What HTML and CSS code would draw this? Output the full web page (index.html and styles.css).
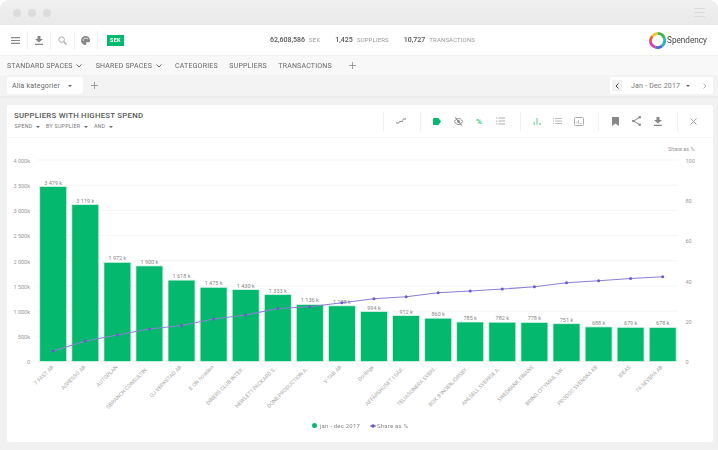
FILE: index.html
```html
<!DOCTYPE html>
<html lang="en">
<head>
<meta charset="utf-8">
<title>Spendency</title>
<link rel="stylesheet" href="styles.css">
</head>
<body>
<div class="window">
  <div class="titlebar">
    <div class="dots"><i></i><i></i><i></i></div>
    <div class="burger"><i></i><i></i><i></i></div>
  </div>
  <header class="toolbar">
    <div class="tools">
      <div class="tool"><svg width="9" height="7" viewBox="0 0 9 7"><path d="M0 .6h9M0 3.500h9M0 6.400h9" stroke="#888" stroke-width="1.100"/></svg></div>
      <div class="tool"><svg width="8" height="9" viewBox="0 0 8 9"><path d="M2.500 0h3v3H8L4 6.500 0 3h2.500zM0 7.800h8V9H0z" fill="#888"/></svg></div>
      <div class="tool"><svg width="9" height="9" viewBox="0 0 9 9"><circle cx="3.600" cy="3.600" r="2.800" fill="none" stroke="#aaa" stroke-width="1"/><path d="M5.700 5.700 8.500 8.500" stroke="#aaa" stroke-width="1.300"/></svg></div>
      <div class="tool tool-last"><svg width="9" height="9" viewBox="0 0 9 9"><path d="M4.500 0a4.500 4.500 0 0 0 0 9c1.200 0 1-1 .7-1.700-.2-.7.2-1.100 1-1.100H8c.7 0 1-.6 1-1.400C9 2 7 0 4.500 0z" fill="#888"/><circle cx="2.200" cy="4" r=".7" fill="#fff"/><circle cx="3.800" cy="2.200" r=".7" fill="#fff"/><circle cx="6" cy="2.500" r=".7" fill="#fff"/></svg></div>
      <span class="badge">SEK</span>
    </div>
    <div class="stats">
      <span><b>62,608,586</b> SEK</span>
      <span><b>1,425</b> SUPPLIERS</span>
      <span><b>10,727</b> TRANSACTIONS</span>
    </div>
    <div class="logo">
      <svg width="17" height="17" viewBox="0 0 17 17" fill="none" stroke-width="2.800">
        <path d="M8.500 1.400a7.100 7.100 0 0 1 6.800 5" stroke="#39b54a"/>
        <path d="M15.300 6.400a7.100 7.100 0 0 1-2.200 7.500" stroke="#1fb5c9"/>
        <path d="M13.100 13.900a7.100 7.100 0 0 1-6.800 1.300" stroke="#4a6fd8"/>
        <path d="M6.300 15.200a7.100 7.100 0 0 1-4.900-6" stroke="#d83fa8"/>
        <path d="M1.400 9.200a7.100 7.100 0 0 1 2-5" stroke="#ef5a3c"/>
        <path d="M3.400 4.200a7.100 7.100 0 0 1 5.100-2.800" stroke="#f4c430"/>
      </svg>
      <span>Spendency</span>
    </div>
  </header>
  <nav class="nav">
    <span class="nav-item nav-menu">STANDARD SPACES <svg class="chev" width="6" height="4" viewBox="0 0 6 4"><path d="M.5.500 3 3 5.500.500" fill="none" stroke="#666"/></svg></span>
    <span class="nav-item nav-menu">SHARED SPACES <svg class="chev" width="6" height="4" viewBox="0 0 6 4"><path d="M.5.500 3 3 5.500.500" fill="none" stroke="#666"/></svg></span>
    <span class="nav-item">CATEGORIES</span>
    <span class="nav-item">SUPPLIERS</span>
    <span class="nav-item">TRANSACTIONS</span>
    <svg class="plus" width="7" height="7" viewBox="0 0 7 7"><path d="M3.500 0v7M0 3.500h7" stroke="#888" stroke-width=".8"/></svg>
  </nav>
  <div class="tabs">
    <div class="tab">Alla kategorier <i class="caret"></i></div>
    <svg class="plus" width="7" height="7" viewBox="0 0 7 7"><path d="M3.500 0v7M0 3.500h7" stroke="#888" stroke-width=".8"/></svg>
    <div class="period">
      <span class="prev"><svg width="4" height="6" viewBox="0 0 4 6"><path d="M3.500.500 1 3l2.500 2.500" fill="none" stroke="#444"/></svg></span>
      <span class="period-label">Jan - Dec 2017</span><i class="caret"></i>
      <svg class="next" width="4" height="6" viewBox="0 0 4 6"><path d="M.5.500 3 3 .5 5.500" fill="none" stroke="#bbb"/></svg>
    </div>
  </div>
  <main class="card">
    <div class="card-head">
      <div class="card-title">
        <h1>SUPPLIERS WITH HIGHEST SPEND</h1>
        <div class="filters"><span>SPEND <i class="caret"></i></span><span>BY SUPPLIER <i class="caret"></i></span><span>AND <i class="caret"></i></span></div>
      </div>
      <div class="actions">
        <div class="group g1"><svg width="10" height="6" viewBox="0 0 10 6"><path d="M0 5h3M3.500 3.500h3M7 1h3" fill="none" stroke="#888" stroke-width="1.100"/><path d="M3 5 3.500 3.500M6.500 3.500 7 1" stroke="#888" stroke-width=".7"/></svg></div>
        <div class="group g2">
          <svg width="8" height="7" viewBox="0 0 8 7"><path d="M1 0h4.500L8 3.500 5.500 7H1a1 1 0 0 1-1-1V1a1 1 0 0 1 1-1z" fill="#04b96d"/></svg>
          <svg width="9" height="9" viewBox="0 0 9 9"><path d="M.3 4.500C1.800 2.200 3.200 1.500 4.500 1.500s2.700.7 4.200 3C7.200 6.800 5.800 7.500 4.500 7.500S1.800 6.800.3 4.500z" fill="none" stroke="#888"/><circle cx="4.500" cy="4.500" r="1.400" fill="#888"/><path d="m1.300 .5 6.400 8" stroke="#888" stroke-width="1.100"/></svg>
          <span class="pct">%</span>
          <svg width="9" height="8" viewBox="0 0 9 8"><path d="M2.500 1H9M2.500 4H9M2.500 7H9M0 1h1.300M0 4h1.300M0 7h1.300" stroke="#aaa"/></svg>
        </div>
        <div class="group g3">
          <svg width="8" height="7" viewBox="0 0 8 7"><path d="M.5 4v3H2V4zM3.300 0v7h1.400V0zM6.300 5v2H8V5z" fill="#8fdcb9"/></svg>
          <svg width="9" height="6" viewBox="0 0 9 6"><path d="M2 .5h7M2 3h7M2 5.500h7M0 .5h1M0 3h1M0 5.500h1" stroke="#bbb"/></svg>
          <svg width="10" height="9" viewBox="0 0 10 9"><rect x=".5" y=".5" width="9" height="8" rx="1" fill="none" stroke="#aaa"/><path d="M3 4.500v2M4.500 3v3.500M5.500 6.500h2" stroke="#aaa" stroke-width=".8"/></svg>
        </div>
        <div class="group g4">
          <svg width="7" height="9" viewBox="0 0 7 9"><path d="M0 0h7v9L3.500 6.500 0 9z" fill="#888"/></svg>
          <svg width="9" height="10" viewBox="0 0 9 10"><path d="M8 1.200 1.500 5 8 8.800" fill="none" stroke="#888"/><circle cx="7.700" cy="1.300" r="1.300" fill="#888"/><circle cx="1.300" cy="5" r="1.300" fill="#888"/><circle cx="7.700" cy="8.700" r="1.300" fill="#888"/></svg>
          <svg width="8" height="9" viewBox="0 0 8 9"><path d="M2.500 0h3v3H8L4 6.500 0 3h2.500zM0 7.800h8V9H0z" fill="#888"/></svg>
        </div>
        <div class="group g5"><svg width="7" height="7" viewBox="0 0 7 7"><path d="m.5.500 6 6m0-6-6 6" stroke="#999" stroke-width=".9"/></svg></div>
      </div>
    </div>
    <div class="chart">
      <svg class="plot" width="706" height="304" viewBox="7 138 706 304">
        <g class="grid">
          <path d="M37 160H678M37 185.200H678M37 210.400H678M37 235.600H678M37 260.800H678M37 286H678M37 311.200H678M37 336.400H678M37 361.600H678"/>
        </g>
        <g class="bars">
          <rect x="39.700" y="186.500" width="27" height="175"/>
          <rect x="71.800" y="204.600" width="27" height="156.900"/>
          <rect x="103.900" y="262.300" width="27" height="99.200"/>
          <rect x="135.900" y="265.900" width="27" height="95.600"/>
          <rect x="168" y="280.100" width="27" height="81.400"/>
          <rect x="200.100" y="287.300" width="27" height="74.200"/>
          <rect x="232.200" y="289.600" width="27" height="71.900"/>
          <rect x="264.300" y="294.500" width="27" height="67"/>
          <rect x="296.300" y="304.400" width="27" height="57.100"/>
          <rect x="328.400" y="305.800" width="27" height="55.700"/>
          <rect x="360.500" y="311.500" width="27" height="50"/>
          <rect x="392.600" y="315.600" width="27" height="45.900"/>
          <rect x="424.700" y="318.200" width="27" height="43.300"/>
          <rect x="456.700" y="322" width="27" height="39.500"/>
          <rect x="488.800" y="322.200" width="27" height="39.300"/>
          <rect x="520.900" y="322.400" width="27" height="39.100"/>
          <rect x="553" y="323.700" width="27" height="37.800"/>
          <rect x="585.100" y="326.900" width="27" height="34.600"/>
          <rect x="617.100" y="327.300" width="27" height="34.200"/>
          <rect x="649.200" y="327.400" width="27" height="34.100"/>
        </g>
        <g class="axis axis-left">
          <text x="30" y="163">4 000k</text><text x="30" y="188">3 500k</text><text x="30" y="213">3 000k</text><text x="30" y="238">2 500k</text><text x="30" y="264">2 000k</text><text x="30" y="289">1 500k</text><text x="30" y="314">1 000k</text><text x="30" y="339">500k</text><text x="30" y="364">0</text>
        </g>
        <g class="axis axis-right">
          <text x="685.500" y="163">100</text><text x="685.500" y="203">80</text><text x="685.500" y="243">60</text><text x="685.500" y="284">40</text><text x="685.500" y="324">20</text><text x="685.500" y="364">0</text>
        </g>
        <text class="axis-title" x="694.500" y="151">Share as %</text>
        <g class="values">
          <text x="53.200" y="184.500">3 479 k</text><text x="85.300" y="202.600">3 119 k</text><text x="117.400" y="260.300">1 972 k</text><text x="149.400" y="263.900">1 900 k</text><text x="181.500" y="278.100">1 618 k</text><text x="213.600" y="285.300">1 475 k</text><text x="245.700" y="287.600">1 430 k</text><text x="277.800" y="292.500">1 333 k</text><text x="309.800" y="302.400">1 136 k</text><text x="341.900" y="303.800">1 108 k</text><text x="374" y="309.500">994 k</text><text x="406.100" y="313.600">912 k</text><text x="438.200" y="316.200">860 k</text><text x="470.200" y="320">785 k</text><text x="502.300" y="320.200">782 k</text><text x="534.400" y="320.400">778 k</text><text x="566.500" y="321.700">751 k</text><text x="598.600" y="324.900">688 k</text><text x="630.600" y="325.300">679 k</text><text x="662.700" y="325.400">678 k</text>
        </g>
        <polyline class="line" points="53.200,351 85.300,341 117.400,335 149.400,329 181.500,325.500 213.600,319 245.700,315 277.800,308.500 309.800,306.700 341.900,302.700 374,298.700 406.100,296.700 438.200,292.700 470.200,291 502.300,289 534.400,286.700 566.500,282.700 598.600,280.700 630.600,278.500 662.700,276.700"/>
        <g class="points">
          <circle cx="53.200" cy="351" r="1.500"/><circle cx="85.300" cy="341" r="1.500"/><circle cx="117.400" cy="335" r="1.500"/><circle cx="149.400" cy="329" r="1.500"/><circle cx="181.500" cy="325.500" r="1.500"/><circle cx="213.600" cy="319" r="1.500"/><circle cx="245.700" cy="315" r="1.500"/><circle cx="277.800" cy="308.500" r="1.500"/><circle cx="309.800" cy="306.700" r="1.500"/><circle cx="341.900" cy="302.700" r="1.500"/><circle cx="374" cy="298.700" r="1.500"/><circle cx="406.100" cy="296.700" r="1.500"/><circle cx="438.200" cy="292.700" r="1.500"/><circle cx="470.200" cy="291" r="1.500"/><circle cx="502.300" cy="289" r="1.500"/><circle cx="534.400" cy="286.700" r="1.500"/><circle cx="566.500" cy="282.700" r="1.500"/><circle cx="598.600" cy="280.700" r="1.500"/><circle cx="630.600" cy="278.500" r="1.500"/><circle cx="662.700" cy="276.700" r="1.500"/>
        </g>
        <g class="names">
          <text transform="translate(54 367.500) rotate(-45)">7 FAST AB</text>
          <text transform="translate(86 367.500) rotate(-45)">AGRESSO AB</text>
          <text transform="translate(118 367.500) rotate(-45)">AUTOPLAN</text>
          <text transform="translate(150 367.500) rotate(-45)">GBRANCH CONSULTIN...</text>
          <text transform="translate(182 367.500) rotate(-45)">GJ VERKSTAD AB</text>
          <text transform="translate(214 367.500) rotate(-45)">E ON hotellen</text>
          <text transform="translate(246 367.500) rotate(-45)">DINERS CLUB INTER...</text>
          <text transform="translate(278 367.500) rotate(-45)">HEWLETT-PACKARD S...</text>
          <text transform="translate(310 367.500) rotate(-45)">DONE PRODUCTION A...</text>
          <text transform="translate(342 367.500) rotate(-45)">V-TAB AB</text>
          <text transform="translate(374 367.500) rotate(-45)">Dorlings</text>
          <text transform="translate(406 367.500) rotate(-45)">AFFÄRSHUSET I SÄR...</text>
          <text transform="translate(438 367.500) rotate(-45)">TELIASONERA SVERI...</text>
          <text transform="translate(470 367.500) rotate(-45)">BOX 8 INGENJÖRSBY...</text>
          <text transform="translate(502 367.500) rotate(-45)">AHLSELL SVERIGE A...</text>
          <text transform="translate(534 367.500) rotate(-45)">SWEDBANK FINANS</text>
          <text transform="translate(566 367.500) rotate(-45)">BRING CITYMAIL SW...</text>
          <text transform="translate(598 367.500) rotate(-45)">PRODOC SVENSKA KB</text>
          <text transform="translate(631 367.500) rotate(-45)">IDEAS</text>
          <text transform="translate(663 367.500) rotate(-45)">7A SEVERA AB</text>
        </g>
      </svg>
      <div class="legend">
        <span class="legend-item"><i class="dot-green"></i>jan - dec 2017</span>
        <span class="legend-item legend-line"><svg width="6" height="4" viewBox="0 0 6 4"><path d="M0 2h6" stroke="#6b5fc7"/><circle cx="3" cy="2" r="1.700" fill="#5f55c4"/></svg>Share as %</span>
      </div>
    </div>
  </main>
</div>
</body>
</html>
```
FILE: styles.css
```css
* { box-sizing: border-box; }
html, body { margin: 0; padding: 0; }
body { width: 718px; height: 450px; overflow: hidden; background: #fff; font-family: "Roboto", "Liberation Sans", sans-serif; color: #555; }
.window { width: 718px; height: 450px; background: #f1f1f1; border-radius: 9px 9px 0 0; overflow: hidden; display: flex; flex-direction: column; filter: blur(.35px); }
.titlebar { height: 25px; flex: none; background: linear-gradient(#f0f0f0, #e9e9e9); display: flex; align-items: center; justify-content: space-between; padding: 0 13px 0 13px; }
.dots { display: flex; gap: 7px; }
.dots i { width: 8px; height: 8px; border-radius: 50%; background: #dcdcdc; }
.burger { display: flex; flex-direction: column; gap: 2.500px; }
.burger i { width: 11px; height: 1.500px; background: #dcdcdc; }
.toolbar { height: 31px; flex: none; background: #fff; border-bottom: 1px solid #efefef; display: flex; align-items: center; }
.tools { width: 270px; flex: none; display: flex; align-items: center; padding-left: 4px; }
.tool { width: 23.500px; height: 19px; display: flex; align-items: center; justify-content: center; border-right: 1px solid #f1f1f1; }
.tool-last { margin-right: 9px; }
.badge { background: #04b96d; color: #fff; font-size: 5.500px; font-weight: 700; letter-spacing: .3px; padding: 1.500px 2px; line-height: 6px; border: 1px solid #04b96d; }
.stats { display: flex; gap: 15px; font-size: 6px; color: #999; letter-spacing: .15px; white-space: nowrap; }
.stats b { color: #555; font-weight: 500; font-size: 7px; letter-spacing: 0; margin-right: 2.500px; }
.logo { margin-left: auto; display: flex; align-items: center; gap: 1.500px; padding-right: 11px; font-size: 8.200px; color: #444; }
.nav { height: 19px; flex: none; background: #f8f8f8; display: flex; align-items: center; padding-left: 7px; font-size: 7px; color: #666; letter-spacing: .2px; white-space: nowrap; }
.nav-item { margin-right: 11.500px; display: flex; align-items: center; gap: 3.500px; }
.nav-menu { margin-right: 13.500px; }
.nav > .plus { margin-left: 5.500px; }
.tabs { height: 23px; flex: none; background: #f3f3f3; border-bottom: 2px solid #ececec; display: flex; align-items: center; padding: 0 5px 0 7px; }
.tab { width: 76px; height: 17px; background: #fff; border-radius: 2px; display: flex; align-items: center; padding-left: 5px; gap: 8px; font-size: 7px; letter-spacing: .2px; color: #666; }
.tabs > .plus { margin-left: 8px; }
.caret { display: inline-block; width: 0; height: 0; border-left: 2px solid transparent; border-right: 2px solid transparent; border-top: 2px solid #666; vertical-align: middle; }
.period { margin-left: auto; width: 103px; height: 17px; background: #fff; border-radius: 2px; display: flex; align-items: center; font-size: 7px; letter-spacing: .2px; color: #777; padding-left: 2px; }
.prev { width: 10px; height: 11px; background: #f1f1f1; display: flex; align-items: center; justify-content: center; margin-right: 9px; }
.period-label { margin-right: 6px; }
.next { margin-left: auto; margin-right: 6px; }
.card { margin: 7px 5px 8px 7px; flex: 1; min-height: 0; background: #fff; border-radius: 2px; display: flex; flex-direction: column; }
.card-head { height: 33px; flex: none; border-bottom: 1px solid #f6f6f6; display: flex; justify-content: space-between; }
.card-title { padding: 6px 0 0 7px; }
.card-title h1 { margin: 0; font-size: 7.800px; line-height: 10px; font-weight: 500; letter-spacing: .25px; color: #555; }
.filters { display: flex; gap: 6px; margin-top: 2px; padding-left: .5px; font-size: 5.300px; line-height: 6px; letter-spacing: .25px; color: #777; }
.filters .caret { margin-left: 2px; }
.actions { display: flex; align-items: center; }
.group { height: 19px; display: flex; align-items: center; border-left: 1px solid #f1f1f1; }
.g1 { width: 37px; padding-left: 12px; }
.g2 { width: 100px; padding-left: 12px; gap: 13px; }
.g3 { width: 78px; padding-left: 12px; gap: 12px; }
.g4 { width: 79px; padding-left: 13px; gap: 13px; }
.g5 { width: 36px; padding-left: 12px; }
.pct { font-size: 8px; font-weight: 700; color: #3fc98f; width: 7px; }
.chart { flex: 1; min-height: 0; position: relative; }
.plot { display: block; }
.grid path { stroke: #f5f5f5; stroke-width: 1; fill: none; }
.bars rect { fill: #04b96d; stroke: #d9f4e8; stroke-width: .8; }
.axis text { font-size: 5.500px; fill: #999; text-anchor: end; }
.axis-right text { text-anchor: start; }
.axis-title { font-size: 5.500px; fill: #999; text-anchor: end; }
.values text { font-size: 5.500px; fill: #888; text-anchor: middle; }
.line { fill: none; stroke: #8c7fd6; stroke-width: 1.100; }
.points circle { fill: #6a5cc8; }
.names text { font-size: 5.400px; fill: #aaa; text-anchor: end; }
.legend { position: absolute; left: 0; right: 0; top: 284px; display: flex; justify-content: center; gap: 9.500px; font-size: 6px; letter-spacing: .2px; color: #888; }
.legend-item { display: flex; align-items: center; gap: 3px; }
.legend-line { gap: 1.500px; }
.dot-green { width: 5px; height: 5px; border-radius: 50%; background: #04b96d; }
```
